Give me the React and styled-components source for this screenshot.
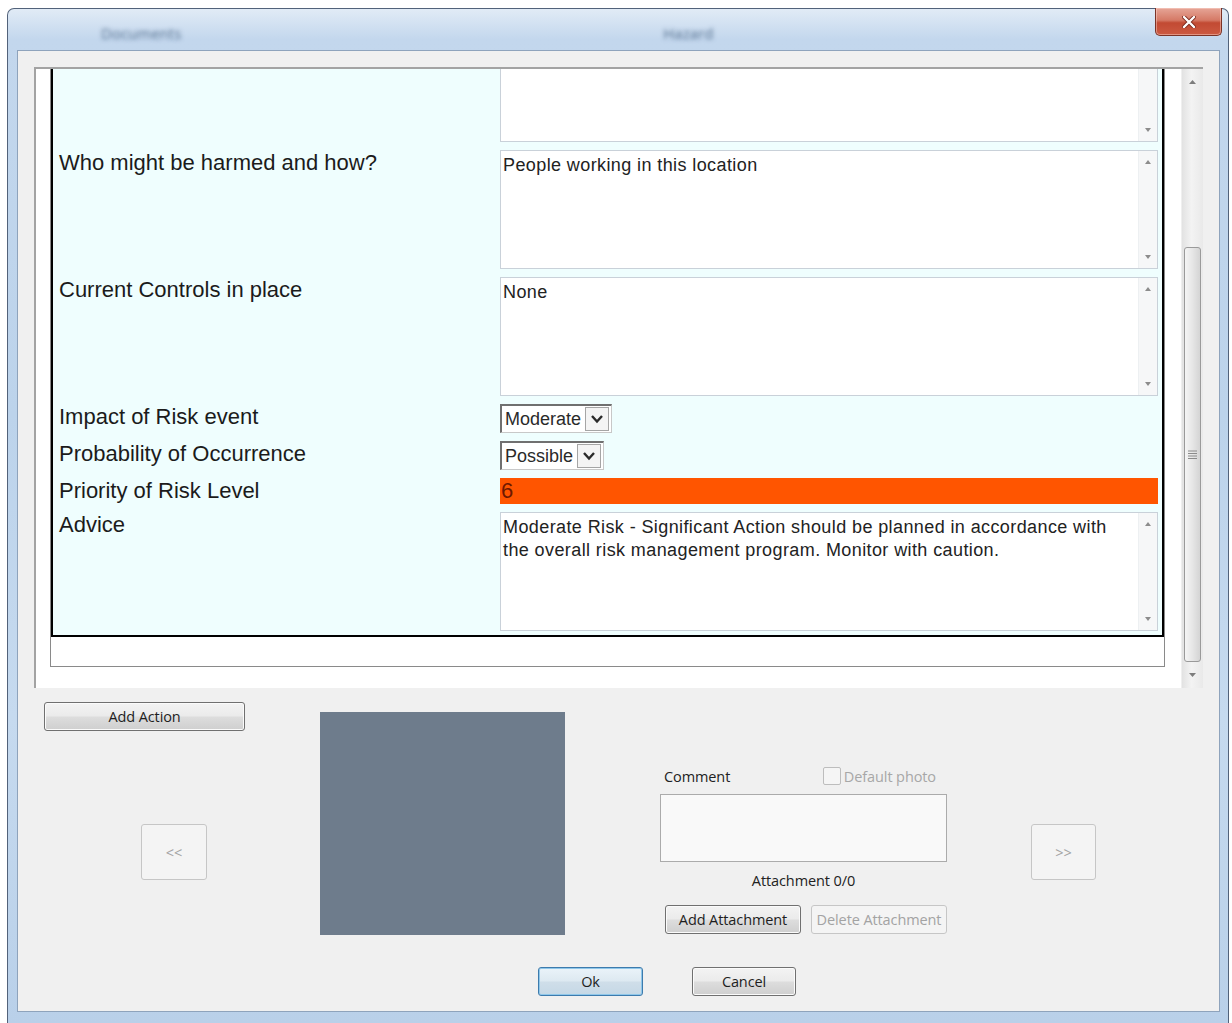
import React from 'react';
import styled, { createGlobalStyle } from 'styled-components';

const Global = createGlobalStyle`
  html, body { margin: 0; padding: 0; background: #ffffff; }
  body {
    width: 1232px; height: 1023px; overflow: hidden;
    font-family: "Liberation Sans", Arial, sans-serif;
  }
  * { box-sizing: border-box; }
`;

const Window = styled.div`
  margin: 8px 0 0 7px;
  width: 1222px;
  height: 1015px;
  border: 1px solid #52627a;
  border-bottom: none;
  border-radius: 7px 7px 0 0;
  background: linear-gradient(180deg, #e1ebf6 0%, #c3d7ed 3%, #bcd3eb 40%, #c6daef 70%, #b9d0e9 100%);
  padding: 0 8px 11px 9px;
  display: flex;
  flex-direction: column;
`;

const TitleBar = styled.div`
  height: 41px;
  display: flex;
  align-items: flex-start;
`;

const TitleText = styled.span`
  margin: 14px 0 0 ${p => p.$offset}px;
  font-family: "Open Sans", sans-serif;
  font-size: 15px;
  line-height: 20px;
  color: transparent;
  text-shadow: 0 0 4px rgba(50, 80, 115, 0.75);
  white-space: nowrap;
`;

const CloseButton = styled.div`
  margin: -1px -2px 0 auto;
  width: 67px;
  height: 28px;
  border: 1px solid #7b3327;
  border-top: none;
  border-radius: 0 0 5px 5px;
  background: linear-gradient(180deg, #e6a597 0%, #d57a66 45%, #c24a33 55%, #cc5a42 100%);
  box-shadow: inset 0 0 0 1px rgba(255, 220, 210, 0.45);
  display: flex;
  align-items: center;
  justify-content: center;
`;

const Client = styled.div`
  flex: 1;
  background: #f0f0f0;
  border: 1px solid #8ea3bc;
  display: flex;
  flex-direction: column;
`;

const ScrollPanel = styled.div`
  margin: 16px 16px 0 16px;
  height: 621px;
  border-top: 2px solid #a3a3a3;
  border-left: 2px solid #a3a3a3;
  background: #ffffff;
  display: flex;
`;

const Viewport = styled.div`
  flex: 1;
  overflow: hidden;
`;

const ContentBox = styled.div`
  margin: -53px 0 0 14px;
  width: 1115px;
  border: 1px solid #8a8a8a;
  background: #ffffff;
  padding-bottom: 29px;
`;

const FormTable = styled.div`
  border: 2px solid #000000;
  background: #effefe;
`;

const Row = styled.div`
  display: flex;
  align-items: flex-start;
  padding: 4px 4px 4px 0;
`;

const Label = styled.div`
  width: 447px;
  flex-shrink: 0;
  padding-left: 6px;
  font-size: 22px;
  line-height: 25px;
  color: #1b1b1b;
`;

const Value = styled.div`
  flex: 1;
  display: flex;
`;

const TextBox = styled.div`
  flex: 1;
  height: 119px;
  border: 1px solid #c9d1d9;
  background: #ffffff;
  display: flex;
`;

const TextContent = styled.div`
  flex: 1;
  padding: 3px 27px 3px 2px;
  font-size: 18px;
  letter-spacing: 0.4px;
  line-height: 23px;
  color: #222222;
`;

const InnerScroll = styled.div`
  width: 19px;
  background: #f6f7f8;
  border-left: 1px solid #edf0f2;
  display: flex;
  flex-direction: column;
  justify-content: space-between;
  align-items: center;
  padding: 9px 0 9px;
`;

const Select = styled.div`
  display: inline-flex;
  align-items: center;
  height: 29px;
  border-top: 2px solid #707070;
  border-left: 2px solid #707070;
  border-right: 1px solid #c8c8c8;
  border-bottom: 1px solid #c8c8c8;
  background: #ffffff;
  padding: 0 2px 0 3px;
  gap: 4px;
  font-size: 18px;
  color: #2a2a2a;
`;

const SelectArrow = styled.span`
  width: 24px;
  height: 24px;
  border: 1px solid #a5a5a5;
  background: #f4f4f4;
  display: flex;
  align-items: center;
  justify-content: center;
`;

const RiskBar = styled.div`
  flex: 1;
  height: 26px;
  background: #ff5500;
  color: #6e1800;
  font-size: 22px;
  line-height: 26px;
  padding-left: 1px;
`;

const ScrollBar = styled.div`
  width: 22px;
  background: linear-gradient(90deg, #e2e2e2 0%, #f3f3f3 45%, #e9e9e9 100%);
  border-left: 1px solid #efefef;
  display: flex;
  flex-direction: column;
`;

const ScrollArrow = styled.div`
  height: 26px;
  display: flex;
  align-items: center;
  justify-content: center;
`;

const ScrollGap = styled.div`
  height: ${p => p.$h}px;
`;

const Thumb = styled.div`
  height: 415px;
  margin: 0 2px;
  border: 1px solid #9a9a9a;
  border-radius: 3px;
  background: linear-gradient(90deg, #f5f5f5 0%, #e6e6e6 50%, #d4d4d4 100%);
  display: flex;
  align-items: center;
  justify-content: center;
`;

const BottomArea = styled.div`
  display: flex;
  align-items: flex-start;
  padding: 14px 0 0 26px;
`;

const LeftCol = styled.div`
  width: 201px;
  display: flex;
  flex-direction: column;
`;

const Button = styled.button`
  width: ${p => p.$w}px;
  height: ${p => p.$h || 29}px;
  margin: 0;
  padding: 0;
  border: 1px solid ${p => (p.$disabled ? '#c6c6c6' : p.$default ? '#3d7bad' : '#707070')};
  border-radius: 3px;
  background: ${p =>
    p.$disabled
      ? '#f4f4f4'
      : p.$default
      ? 'linear-gradient(180deg, #eaf3f9 0%, #dde9f1 48%, #cfdee9 52%, #c5d8e6 100%)'
      : 'linear-gradient(180deg, #f3f3f3 0%, #ebebeb 48%, #dddddd 52%, #cfcfcf 100%)'};
  box-shadow: ${p => (p.$default ? 'inset 0 0 0 1px #8fc7ea' : p.$disabled ? 'none' : 'inset 0 0 0 1px #fbfbfb')};
  font-family: "Open Sans", sans-serif;
  font-size: 14.5px;
  letter-spacing: -0.1px;
  color: ${p => (p.$disabled ? '#a3a3a3' : '#1e1e1e')};
  display: flex;
  align-items: center;
  justify-content: center;
`;

const NavButton = styled(Button)`
  margin: ${p => p.$mt}px 0 0 ${p => p.$ml}px;
  flex-shrink: 0;
`;

const Photo = styled.div`
  width: 245px;
  height: 223px;
  margin: 10px 0 0 75px;
  background: #6e7c8c;
  flex-shrink: 0;
`;

const CommentCol = styled.div`
  width: 287px;
  margin: 64px 0 0 95px;
  display: flex;
  flex-direction: column;
  flex-shrink: 0;
`;

const CommentHeader = styled.div`
  height: 20px;
  display: flex;
  align-items: center;
  padding-left: 4px;
`;

const SmallText = styled.span`
  font-family: "Open Sans", sans-serif;
  font-size: 14.5px;
  letter-spacing: -0.1px;
  color: ${p => (p.$muted ? '#a7a7a7' : '#222222')};
`;

const CheckWrap = styled.div`
  margin-left: auto;
  margin-right: 11px;
  display: flex;
  align-items: center;
  gap: 3px;
`;

const CheckBox = styled.span`
  width: 18px;
  height: 18px;
  border: 1px solid #bdbdbd;
  border-radius: 2px;
  background: #f5f5f5;
`;

const CommentInput = styled.div`
  margin-top: 8px;
  height: 68px;
  border: 1px solid #ababab;
  background: #f9f9f9;
`;

const AttachInfo = styled.div`
  margin-top: 10px;
  height: 18px;
  line-height: 18px;
  text-align: center;
`;

const AttachButtons = styled.div`
  margin-top: 15px;
  padding-left: 5px;
  display: flex;
  gap: 10px;
`;

const Footer = styled.div`
  margin-top: 32px;
  padding-left: 520px;
  display: flex;
  gap: 49px;
`;

const Tri = ({ up, w = 7, h = 4, color = '#7d7d7d' }) => (
  <svg width={w} height={h} viewBox={`0 0 ${w} ${h}`}>
    {up ? (
      <polygon points={`0,${h} ${w},${h} ${w / 2},0`} fill={color} />
    ) : (
      <polygon points={`0,0 ${w},0 ${w / 2},${h}`} fill={color} />
    )}
  </svg>
);

const Chevron = () => (
  <svg width="14" height="10" viewBox="0 0 14 10">
    <polyline points="2,2 7,7.5 12,2" fill="none" stroke="#2a2a2a" strokeWidth="2.4" />
  </svg>
);

const Grip = () => (
  <svg width="9" height="9" viewBox="0 0 9 9">
    <line x1="0" y1="1" x2="9" y2="1" stroke="#8a8a8a" strokeWidth="1" />
    <line x1="0" y1="3.5" x2="9" y2="3.5" stroke="#8a8a8a" strokeWidth="1" />
    <line x1="0" y1="6" x2="9" y2="6" stroke="#8a8a8a" strokeWidth="1" />
    <line x1="0" y1="8.5" x2="9" y2="8.5" stroke="#8a8a8a" strokeWidth="1" />
  </svg>
);

const CloseX = () => (
  <svg width="14" height="12" viewBox="0 0 14 12">
    <path d="M2 1 L12 11 M12 1 L2 11" stroke="#7a2a1e" strokeWidth="4" strokeLinecap="round" />
    <path d="M2 1 L12 11 M12 1 L2 11" stroke="#ffffff" strokeWidth="2.4" strokeLinecap="round" />
  </svg>
);

const TextArea = ({ children }) => (
  <TextBox>
    <TextContent>{children}</TextContent>
    <InnerScroll>
      <Tri up w={6} h={4} color="#8c8c8c" />
      <Tri w={6} h={4} color="#8c8c8c" />
    </InnerScroll>
  </TextBox>
);

const rows = [
  { label: 'Hazard Description', type: 'text', value: '' },
  { label: 'Who might be harmed and how?', type: 'text', value: 'People working in this location' },
  { label: 'Current Controls in place', type: 'text', value: 'None' },
  { label: 'Impact of Risk event', type: 'select', value: 'Moderate' },
  { label: 'Probability of Occurrence', type: 'select', value: 'Possible' },
  { label: 'Priority of Risk Level', type: 'risk', value: '6' },
  {
    label: 'Advice',
    type: 'text',
    value:
      'Moderate Risk - Significant Action should be planned in accordance with the overall risk management program. Monitor with caution.',
  },
];

export default function App() {
  return (
    <>
      <Global />
      <Window>
        <TitleBar>
          <TitleText $offset={84}>Documents</TitleText>
          <TitleText $offset={482}>Hazard</TitleText>
          <CloseButton>
            <CloseX />
          </CloseButton>
        </TitleBar>
        <Client>
          <ScrollPanel>
            <Viewport>
              <ContentBox>
                <FormTable>
                  {rows.map(r => (
                    <Row key={r.label}>
                      <Label>{r.label}</Label>
                      <Value>
                        {r.type === 'text' && <TextArea>{r.value}</TextArea>}
                        {r.type === 'select' && (
                          <Select>
                            {r.value}
                            <SelectArrow>
                              <Chevron />
                            </SelectArrow>
                          </Select>
                        )}
                        {r.type === 'risk' && <RiskBar>{r.value}</RiskBar>}
                      </Value>
                    </Row>
                  ))}
                </FormTable>
              </ContentBox>
            </Viewport>
            <ScrollBar>
              <ScrollArrow>
                <Tri up />
              </ScrollArrow>
              <ScrollGap $h={152} />
              <Thumb>
                <Grip />
              </Thumb>
              <ScrollArrow>
                <Tri />
              </ScrollArrow>
            </ScrollBar>
          </ScrollPanel>

          <BottomArea>
            <LeftCol>
              <Button $w={201}>Add Action</Button>
              <NavButton $w={66} $h={56} $mt={93} $ml={97} $disabled>
                &lt;&lt;
              </NavButton>
            </LeftCol>
            <Photo />
            <CommentCol>
              <CommentHeader>
                <SmallText>Comment</SmallText>
                <CheckWrap>
                  <CheckBox />
                  <SmallText $muted>Default photo</SmallText>
                </CheckWrap>
              </CommentHeader>
              <CommentInput />
              <AttachInfo>
                <SmallText>Attachment 0/0</SmallText>
              </AttachInfo>
              <AttachButtons>
                <Button $w={136}>Add Attachment</Button>
                <Button $w={136} $disabled>
                  Delete Attachment
                </Button>
              </AttachButtons>
            </CommentCol>
            <NavButton $w={65} $h={56} $mt={122} $ml={84} $disabled>
              &gt;&gt;
            </NavButton>
          </BottomArea>

          <Footer>
            <Button $w={105} $default>
              Ok
            </Button>
            <Button $w={104}>Cancel</Button>
          </Footer>
        </Client>
      </Window>
    </>
  );
}
